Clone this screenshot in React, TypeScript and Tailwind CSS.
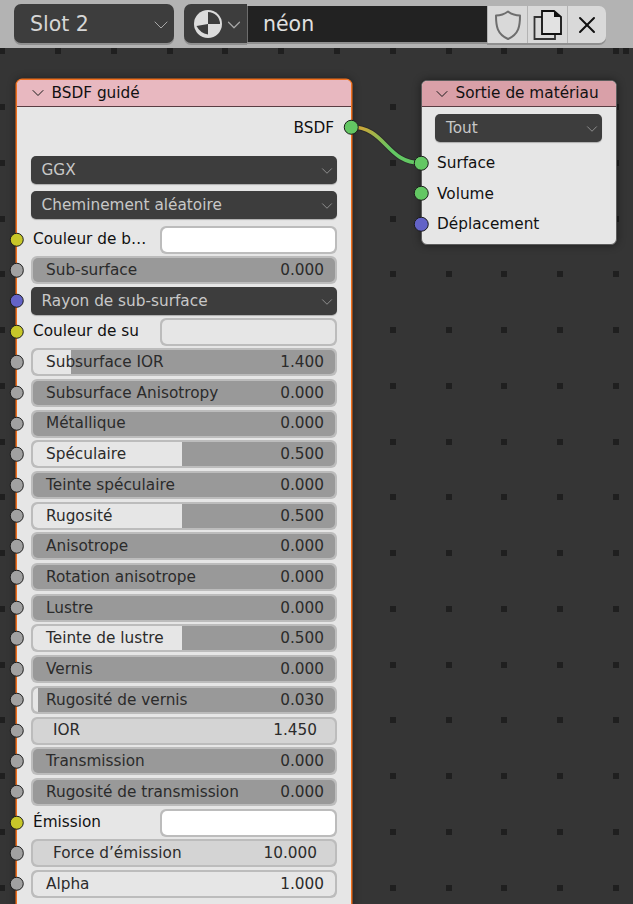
import { ChevronDown, X } from "lucide-react";

type SocketKind = "gray" | "yellow" | "blue" | "green";

const socketColors: Record<SocketKind, string> = {
  gray: "bg-[#a1a1a1]",
  yellow: "bg-[#c7c729]",
  blue: "bg-[#6363c7]",
  green: "bg-[#63c763]",
};

// grid dots of the node editor
const dotXs = [2, 58, 114, 170, 225, 281, 337, 393, 449, 504, 560, 616, 626];
const dotYs = [51, 107, 163, 219, 274, 330, 386, 442, 497, 553, 609, 665, 720, 776, 832, 888];

const Socket = ({ kind, className }: { kind: SocketKind; className: string }) => (
  <span
    className={`absolute w-[14.5px] h-[14.5px] rounded-full border-[1.5px] border-[#1c1c1c] -translate-x-1/2 -translate-y-1/2 ${socketColors[kind]} ${className}`}
  />
);

const Dropdown = ({ label, className = "" }: { label: string; className?: string }) => (
  <div
    className={`flex items-center justify-between h-[28px] pl-[11px] pr-[1px] rounded-[5px] bg-[#3d3d3d] text-[#c8c8c8] shadow-[0_1px_1px_rgba(0,0,0,0.25)] ${className}`}
  >
    <span className="pt-[1.5px]">{label}</span>
    <ChevronDown size={18} strokeWidth={1} className="text-[#a8a8a8] mt-[2px]" />
  </div>
);

const Slider = ({ label, value, fill }: { label: string; value: string; fill: number }) => (
  <div className="relative h-[28px] rounded-[6px] bg-[#bcbcbc] p-[2px]">
    <div className="relative h-full rounded-[5px] bg-[#999999] overflow-hidden">
      <div className="absolute inset-y-0 left-0 bg-[#e6e6e6]" style={{ width: `${fill}%` }} />
      <div className="relative flex items-center justify-between h-full pl-[13.5px] pr-[11px] pt-[1px] text-[#2b2b2b]">
        <span>{label}</span>
        <span>{value}</span>
      </div>
    </div>
  </div>
);

const NumberField = ({ label, value }: { label: string; value: string }) => (
  <div className="h-[28px] rounded-[6px] bg-[#bcbcbc] p-[2px]">
    <div className="flex items-center justify-between h-full rounded-[5px] bg-[#d4d4d4] pl-[20.5px] pr-[18px] pt-[1px] text-[#2b2b2b]">
      <span>{label}</span>
      <span>{value}</span>
    </div>
  </div>
);

const ColorRow = ({ label, swatch }: { label: string; swatch: string }) => (
  <div className="flex items-center h-[28px]">
    <span className="w-[129.5px] pl-[2.5px] pt-[1px] text-[#111111] whitespace-nowrap">{label}</span>
    <div className="flex-1 h-full rounded-[6px] bg-[#bcbcbc] p-[2px]">
      <div className={`h-full rounded-[5px] ${swatch}`} />
    </div>
  </div>
);

type Row =
  | { type: "slider"; label: string; value: string; fill: number }
  | { type: "number"; label: string; value: string }
  | { type: "color"; label: string; swatch: string }
  | { type: "dropdown"; label: string };

const rows: (Row & { socket: SocketKind })[] = [
  { type: "color", label: "Couleur de b…", swatch: "bg-white", socket: "yellow" },
  { type: "slider", label: "Sub-surface", value: "0.000", fill: 0, socket: "gray" },
  { type: "dropdown", label: "Rayon de sub-surface", socket: "blue" },
  { type: "color", label: "Couleur de su", swatch: "bg-[#e6e6e6]", socket: "yellow" },
  { type: "slider", label: "Subsurface IOR", value: "1.400", fill: 12.7, socket: "gray" },
  { type: "slider", label: "Subsurface Anisotropy", value: "0.000", fill: 0, socket: "gray" },
  { type: "slider", label: "Métallique", value: "0.000", fill: 0, socket: "gray" },
  { type: "slider", label: "Spéculaire", value: "0.500", fill: 49.5, socket: "gray" },
  { type: "slider", label: "Teinte spéculaire", value: "0.000", fill: 0, socket: "gray" },
  { type: "slider", label: "Rugosité", value: "0.500", fill: 49.5, socket: "gray" },
  { type: "slider", label: "Anisotrope", value: "0.000", fill: 0, socket: "gray" },
  { type: "slider", label: "Rotation anisotrope", value: "0.000", fill: 0, socket: "gray" },
  { type: "slider", label: "Lustre", value: "0.000", fill: 0, socket: "gray" },
  { type: "slider", label: "Teinte de lustre", value: "0.500", fill: 49.5, socket: "gray" },
  { type: "slider", label: "Vernis", value: "0.000", fill: 0, socket: "gray" },
  { type: "slider", label: "Rugosité de vernis", value: "0.030", fill: 1.7, socket: "gray" },
  { type: "number", label: "IOR", value: "1.450", socket: "gray" },
  { type: "slider", label: "Transmission", value: "0.000", fill: 0, socket: "gray" },
  { type: "slider", label: "Rugosité de transmission", value: "0.000", fill: 0, socket: "gray" },
  { type: "color", label: "Émission", swatch: "bg-white", socket: "yellow" },
  { type: "number", label: "Force d’émission", value: "10.000", socket: "gray" },
  { type: "slider", label: "Alpha", value: "1.000", fill: 100, socket: "gray" },
];

const NodeRow = ({ row }: { row: Row & { socket: SocketKind } }) => (
  <div className="relative">
    <Socket kind={row.socket} className="left-[-14px] top-1/2" />
    {row.type === "slider" && <Slider label={row.label} value={row.value} fill={row.fill} />}
    {row.type === "number" && <NumberField label={row.label} value={row.value} />}
    {row.type === "color" && <ColorRow label={row.label} swatch={row.swatch} />}
    {row.type === "dropdown" && <Dropdown label={row.label} />}
  </div>
);

const MaterialIcon = () => (
  <svg width="30" height="30" viewBox="0 0 30 30" className="shrink-0">
    <circle cx="15" cy="15" r="14" fill="#dcdcdc" />
    <path d="M15 15 L15 3 A12 12 0 0 1 27 15 Z" fill="#3d3d3d" />
    <path d="M15 15 L3.5 17 Q7 24 15 25.5 Z" fill="#3d3d3d" />
  </svg>
);

const ShieldIcon = () => (
  <svg width="30" height="32" viewBox="0 0 30 32" fill="none">
    <path
      d="M15 2.5 C11 5.5 7 6.5 3 6.5 C3 17 4 25 15 30 C26 25 27 17 27 6.5 C23 6.5 19 5.5 15 2.5 Z"
      stroke="#6e6e6e"
      strokeWidth="2"
      strokeLinejoin="round"
    />
  </svg>
);

const CopyIcon = () => (
  <svg width="30" height="32" viewBox="0 0 30 32" fill="none">
    <path d="M9 8 H1.5 V30 H22 V25" stroke="#333333" strokeWidth="1.8" />
    <path d="M9 2 H21 L28 8 V25 H9 Z" fill="#e2e2e2" stroke="#111111" strokeWidth="1.8" />
    <path d="M21 2 L28 8 H21 Z" fill="#111111" />
  </svg>
);

const Chevron = () => <ChevronDown size={20} strokeWidth={1.2} className="text-[#1a1a1a]" />;

export default function App() {
  return (
    <div className="relative w-[633px] h-[904px] overflow-hidden bg-[#353535] text-[15.3px] leading-none font-['DejaVu_Sans',sans-serif]">
      {/* top bar */}
      <div className="flex items-start h-[48px] pt-[4px] pl-[14px] bg-[#b3b3b3] text-[20.5px]">
        <div className="flex items-center justify-between w-[160px] h-[39px] pl-[16px] pr-[1px] rounded-[7px] bg-[#3d3d3d] text-[#d6d6d6] shadow-[0_2px_0_#8f8f8f]">
          <span className="pt-[2px]">Slot 2</span>
          <ChevronDown size={24} strokeWidth={1} className="text-[#a8a8a8] mt-[3px]" />
        </div>
        <div className="flex h-[39px] ml-[10px]">
          <div className="flex items-center w-[63px] pl-[9px] rounded-l-[7px] bg-[#3d3d3d] shadow-[0_2px_0_#8f8f8f]">
            <MaterialIcon />
            <ChevronDown size={22} strokeWidth={1.3} className="text-[#a8a8a8] mt-[2px] shrink-0" />
          </div>
          <div className="flex items-center w-[240px] mt-[2px] h-[36px] pl-[15px] pt-[1px] bg-[#222222] border-l-[1px] border-[#6d6d6d] text-[#e0e0e0] shadow-[0_2px_0_#8f8f8f]">
            néon
          </div>
          <div className="flex mt-[2px] h-[37px] shadow-[0_2px_0_#8f8f8f] rounded-r-[7px]">
            <div className="flex items-center justify-center w-[40px] bg-[#d9d9d9] border-l border-[#b3b3b3]">
              <ShieldIcon />
            </div>
            <div className="flex items-center justify-center w-[40px] bg-[#d9d9d9] border-l border-[#b3b3b3]">
              <CopyIcon />
            </div>
            <div className="flex items-center justify-center w-[39px] rounded-r-[7px] bg-[#d9d9d9] border-l border-[#b3b3b3]">
              <X size={28} strokeWidth={1.7} className="text-[#111111]" />
            </div>
          </div>
        </div>
      </div>

      {/* grid dots */}
      <svg className="absolute left-0 top-0" width="633" height="904">
        {dotYs.map((y) =>
          dotXs.map((x) =>
            x === 626 && y !== 51 ? null : (
              <rect key={`${x}-${y}`} x={x - 3} y={y - 3} width="6" height="6" fill="#1f1f1f" />
            ),
          ),
        )}
      </svg>

      {/* BSDF node */}
      <div className="absolute left-[16px] top-[79px] w-[336px] h-[860px] rounded-[6px] border-[1.5px] border-[#f0701f] bg-[#e6e6e6] shadow-[0_0_0_0.5px_#f0701f,0_0_8px_rgba(0,0,0,0.45)]">
        <div className="flex items-center h-[27px] pl-[10.5px] gap-[4px] rounded-t-[5px] bg-[#e8b8c0] border-b border-[#5a3d43] text-[#111111]">
          <Chevron />
          <span className="pt-[1px]">BSDF guidé</span>
        </div>
        <div className="relative h-[28px] mt-[7px] flex items-center justify-end pr-[17px] pt-[1px] text-[#111111]">
          BSDF
        </div>
        <div className="flex flex-col gap-[7px] mt-[13.5px] ml-[13.5px] mr-[14px]">
          <Dropdown label="GGX" />
          <Dropdown label="Cheminement aléatoire" />
        </div>
        <div className="flex flex-col gap-[2.7px] mt-[7px] ml-[13.5px] mr-[14px]">
          {rows.map((row) => (
            <NodeRow key={row.label} row={row} />
          ))}
        </div>
      </div>

      {/* material output node */}
      <div className="absolute left-[421px] top-[80px] w-[195.5px] h-[165px] rounded-[6px] border-[1.5px] border-[#5c5c5c] bg-[#e6e6e6] shadow-[0_0_8px_rgba(0,0,0,0.45)]">
        <div className="flex items-center h-[26px] pl-[9.5px] gap-[4px] rounded-t-[5px] bg-[#d9a0a8] border-b border-[#5a3d43] text-[#111111]">
          <Chevron />
          <span className="pt-[1px]">Sortie de matériau</span>
        </div>
        <Dropdown label="Tout" className="ml-[13px] mr-[14px] mt-[7px]" />
        <div className="flex flex-col mt-[6px] pl-[15px] text-[#111111]">
          <div className="flex items-center h-[30.7px]">Surface</div>
          <div className="flex items-center h-[30.7px] pt-[1px]">Volume</div>
          <div className="flex items-center h-[30.7px]">Déplacement</div>
        </div>
      </div>

      {/* link between the two nodes */}
      <svg className="absolute left-0 top-0 pointer-events-none" width="633" height="904" fill="none">
        <defs>
          <linearGradient id="link" gradientUnits="userSpaceOnUse" x1="355" y1="127" x2="415" y2="163">
            <stop offset="0.1" stopColor="#c9a83a" />
            <stop offset="0.6" stopColor="#63c763" />
          </linearGradient>
        </defs>
        <path d="M351 127 C386 127 386 163 421 163" stroke="#2a2a2a" strokeWidth="5.5" />
        <path d="M351 127 C386 127 386 163 421 163" stroke="url(#link)" strokeWidth="3.6" />
      </svg>

      {/* sockets on top of the link */}
      <Socket kind="green" className="left-[351px] top-[127px]" />
      <Socket kind="green" className="left-[421px] top-[163px]" />
      <Socket kind="green" className="left-[421px] top-[193px]" />
      <Socket kind="blue" className="left-[421px] top-[224px]" />
    </div>
  );
}
